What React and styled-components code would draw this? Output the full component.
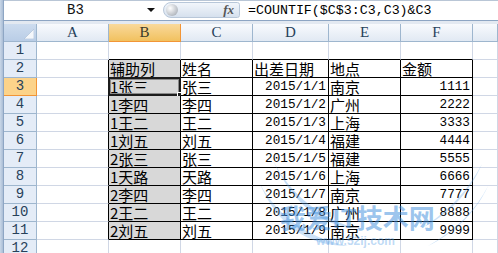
import React from "react";
import styled, { createGlobalStyle } from "styled-components";

const GlobalStyle = createGlobalStyle`
  html, body {
    margin: 0;
    padding: 0;
    width: 498px;
    height: 253px;
    overflow: hidden;
    background: #ffffff;
  }
`;

const COLS = [33, 72, 72, 72, 76, 72, 72, 25];
const LETTERS = ["A", "B", "C", "D", "E", "F", ""];
const GRID = "#d0d7e5";
const HEAD_LINE = "#9eb6ce";

const header = ["辅助列", "姓名", "出差日期", "地点", "金额"];
const rows = [
  ["1张三", "张三", "2015/1/1", "南京", "1111"],
  ["1李四", "李四", "2015/1/2", "广州", "2222"],
  ["1王二", "王二", "2015/1/3", "上海", "3333"],
  ["1刘五", "刘五", "2015/1/4", "福建", "4444"],
  ["2张三", "张三", "2015/1/5", "福建", "5555"],
  ["1天路", "天路", "2015/1/6", "上海", "6666"],
  ["2李四", "李四", "2015/1/7", "南京", "7777"],
  ["2王二", "王二", "2015/1/8", "广州", "8888"],
  ["2刘五", "刘五", "2015/1/9", "南京", "9999"],
];

const App = () => {
  const data = {};
  header.forEach((v, i) => (data[`2-${i + 2}`] = { v }));
  rows.forEach((row, ri) =>
    row.forEach((v, i) => {
      const num = i === 2 || i === 4;
      data[`${ri + 3}-${i + 2}`] = { v, num };
    })
  );

  const inTable = (r, c) => r >= 2 && r <= 11 && c >= 2 && c <= 6;

  const renderRow = (r) => {
    const cells = [
      <RowHead key="h" $sel={r === 3}>
        {r}
      </RowHead>,
    ];
    for (let c = 1; c <= 7; c++) {
      const d = data[`${r}-${c}`];
      const right =
        inTable(r, c) || (c === 1 && r >= 2 && r <= 11) ? "#000" : GRID;
      const bottom =
        inTable(r, c) || (r === 1 && c >= 2 && c <= 6) ? "#000" : GRID;
      cells.push(
        <Cell
          key={c}
          $right={right}
          $bottom={bottom}
          $fill={c === 2 && r >= 2 && r <= 11}
          $num={d && d.num}
        >
          {d ? d.v : ""}
          {r === 3 && c === 2 && (
            <>
              <Active />
              <Handle />
            </>
          )}
        </Cell>
      );
    }
    return cells;
  };

  return (
    <Window>
      <GlobalStyle />
      <Strip />
      <Main>
        <FormulaBar>
          <NameBox>
            <NameText>B3</NameText>
            <Caret />
          </NameBox>
          <FxPill>
            <Knob />
            <Fx>fx</Fx>
          </FxPill>
          <Formula>=COUNTIF($C$3:C3,C3)&amp;C3</Formula>
        </FormulaBar>
        <Spacer />
        <Sheet>
          <Corner>
            <svg width="10" height="10" viewBox="0 0 10 10">
              <polygon points="10,0 10,10 0,10" fill="#f4f7fb" stroke="#a8bcd4" strokeWidth="0.6" />
            </svg>
          </Corner>
          {LETTERS.map((l, i) => (
            <ColHead key={i} $sel={l === "B"}>
              {l}
            </ColHead>
          ))}
          {Array.from({ length: 12 }, (_, i) => renderRow(i + 1))}
        </Sheet>
        <Watermark>
          <svg width="236" height="110" viewBox="0 0 236 110">
            <path
              d="M14 4 C 30 40, 60 66, 98 78 C 60 74, 34 50, 14 4 Z"
              fill="rgba(90,160,230,0.35)"
            />
            <path
              d="M4 34 C 22 66, 52 88, 92 96 C 52 96, 22 76, 4 34 Z"
              fill="rgba(90,160,230,0.3)"
            />
            <path
              d="M232 36 C 218 66, 196 84, 172 96 C 200 80, 220 60, 232 36 Z"
              fill="rgba(90,160,230,0.35)"
            />
            <path
              d="M226 14 C 212 46, 190 66, 166 78 C 194 60, 212 40, 226 14 Z"
              fill="rgba(90,160,230,0.3)"
            />
          </svg>
          <MarkTitle>我爱IT技术网</MarkTitle>
          <MarkUrl>www.52ij.com</MarkUrl>
        </Watermark>
      </Main>
    </Window>
  );
};

export default App;

const Window = styled.div`
  display: flex;
  width: 498px;
  height: 253px;
  overflow: hidden;
  font-family: "Noto Sans CJK SC", sans-serif;
`;

const Strip = styled.div`
  width: 4px;
  flex: none;
  background: linear-gradient(to right, #c9d7e8, #aabdd5);
  border-right: 1px solid #8ea6c4;
  box-sizing: border-box;
`;

const Main = styled.div`
  position: relative;
  flex: 1;
  display: flex;
  flex-direction: column;
  min-width: 0;
`;

const FormulaBar = styled.div`
  height: 21px;
  box-sizing: border-box;
  display: flex;
  align-items: center;
  border-top: 1px solid #b9c6d6;
  border-bottom: 1px solid #8da5c3;
  background: #ffffff;
`;

const NameBox = styled.div`
  width: 159px;
  height: 100%;
  display: flex;
  align-items: center;
  box-sizing: border-box;
`;

const NameText = styled.span`
  flex: 1;
  text-align: center;
  font-family: "Liberation Mono", monospace;
  font-size: 14px;
  color: #111;
`;

const Caret = styled.span`
  width: 0;
  height: 0;
  margin-right: 8px;
  border-left: 4px solid transparent;
  border-right: 4px solid transparent;
  border-top: 4px solid #111;
`;

const FxPill = styled.div`
  width: 77px;
  height: 16px;
  border-radius: 9px 3px 3px 9px;
  border: 1px solid #b8c7d9;
  background: linear-gradient(to bottom, #f2f6fb, #d6e1ee);
  display: flex;
  align-items: center;
  justify-content: space-between;
  padding: 0 5px 0 2px;
  box-sizing: border-box;
`;

const Knob = styled.span`
  width: 12px;
  height: 12px;
  border-radius: 50%;
  background: radial-gradient(circle at 35% 35%, #ffffff, #b7bcc3 70%, #9aa1aa);
`;

const Fx = styled.span`
  font-family: "Liberation Serif", serif;
  font-style: italic;
  font-weight: bold;
  font-size: 13px;
  color: #555;
`;

const Formula = styled.span`
  margin-left: 8px;
  font-family: "Liberation Mono", monospace;
  font-size: 13.3px;
  color: #000;
  white-space: nowrap;
`;

const Spacer = styled.div`
  height: 3px;
  background: #e3e9f1;
`;

const Sheet = styled.div`
  display: grid;
  grid-template-columns: ${COLS.map((w) => `${w}px`).join(" ")};
  grid-auto-rows: 18px;
  overflow: hidden;
`;

const Corner = styled.div`
  box-sizing: border-box;
  background: linear-gradient(to bottom, #cddcef, #b9cde6);
  border-right: 1px solid ${HEAD_LINE};
  border-bottom: 1px solid ${HEAD_LINE};
  display: flex;
  align-items: flex-end;
  justify-content: flex-end;
  padding: 0 2px 2px 0;
`;

const ColHead = styled.div`
  box-sizing: border-box;
  display: flex;
  align-items: center;
  justify-content: center;
  font-family: "Liberation Serif", serif;
  font-size: 15px;
  color: ${(p) => (p.$sel ? "#3a3a2a" : "#27415a")};
  background: ${(p) =>
    p.$sel
      ? "linear-gradient(to bottom, #f9d99b, #f1c15f)"
      : "linear-gradient(to bottom, #f8fafd, #e1e9f3)"};
  border-right: 1px solid ${(p) => (p.$sel ? "#f29536" : HEAD_LINE)};
  border-bottom: 1px solid ${(p) => (p.$sel ? "#f29536" : HEAD_LINE)};
`;

const RowHead = styled.div`
  box-sizing: border-box;
  display: flex;
  align-items: center;
  justify-content: center;
  font-family: "Liberation Mono", monospace;
  font-size: 14px;
  color: #27415a;
  background: ${(p) => (p.$sel ? "#fcd38a" : "#e4ecf7")};
  border-right: 1px solid ${(p) => (p.$sel ? "#f29536" : HEAD_LINE)};
  border-bottom: 1px solid ${(p) => (p.$sel ? "#f29536" : HEAD_LINE)};
`;

const Cell = styled.div`
  position: relative;
  box-sizing: border-box;
  display: flex;
  align-items: flex-end;
  justify-content: ${(p) => (p.$num ? "flex-end" : "flex-start")};
  padding: 0 2px 0 1px;
  font-size: ${(p) => (p.$num ? "12.7px" : "15px")};
  font-family: ${(p) =>
    p.$num ? `"Liberation Mono", monospace` : `"Noto Sans CJK SC", sans-serif`};
  line-height: 17px;
  color: #000;
  white-space: nowrap;
  background: ${(p) => (p.$fill ? "#d8d8d8" : "#fff")};
  border-right: 1px solid ${(p) => p.$right};
  border-bottom: 1px solid ${(p) => p.$bottom};
`;

const Active = styled.div`
  position: absolute;
  top: -1px;
  left: -1px;
  right: -1px;
  bottom: -1px;
  border: 2px solid #1c1c1c;
  box-shadow: inset 0 0 0 1px #8a8a8a;
  pointer-events: none;
`;

const Handle = styled.div`
  position: absolute;
  right: -4px;
  bottom: -4px;
  width: 5px;
  height: 5px;
  background: #1c1c1c;
  border: 1px solid #fff;
`;

const Watermark = styled.div`
  position: absolute;
  left: 252px;
  top: 150px;
  width: 236px;
  height: 110px;
  pointer-events: none;

  svg {
    position: absolute;
    left: 0;
    top: 0;
  }
`;

const MarkTitle = styled.div`
  position: absolute;
  left: 24px;
  top: 52px;
  font-family: "Noto Sans CJK SC", sans-serif;
  font-weight: bold;
  font-size: 26px;
  line-height: 30px;
  color: rgba(60, 140, 220, 0.5);
  white-space: nowrap;
`;

const MarkUrl = styled.div`
  position: absolute;
  left: 60px;
  top: 84px;
  font-family: "Liberation Sans", sans-serif;
  font-weight: bold;
  font-size: 12px;
  color: rgba(90, 160, 230, 0.4);
`;
